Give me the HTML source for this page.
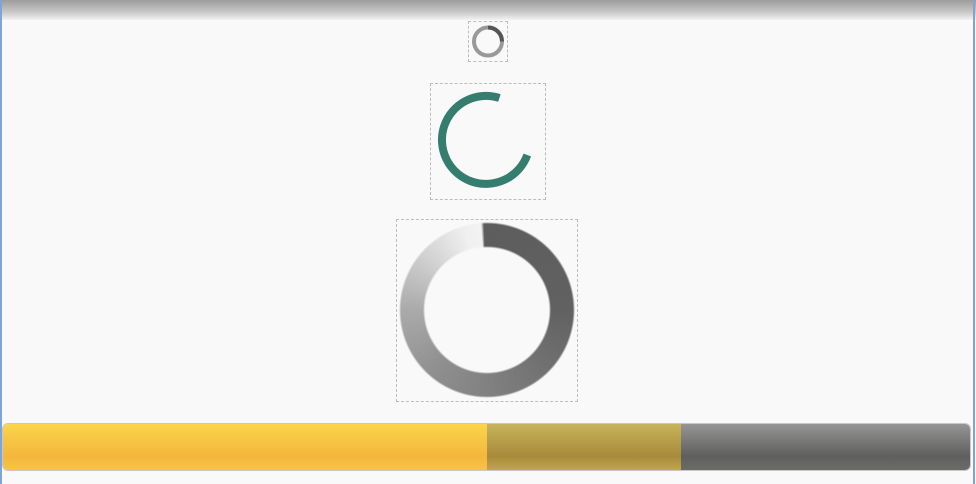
<!DOCTYPE html><html><head><style>
body{margin:0;width:976px;height:484px;background:#f9f9f9;position:relative;overflow:hidden;font-family:"Liberation Sans",sans-serif}
.top{position:absolute;left:0;top:0;width:976px;height:20px;background:linear-gradient(#9c9c9c,#c8c8c8 60%,#f2f2f2)}
.lb{position:absolute;left:0;top:0;width:2px;height:484px;background:#7ea6d4}
.rb{position:absolute;right:1px;top:0;width:2px;height:484px;background:#7ea6d4}
.box{position:absolute;border:1px dashed #bdbdbd;box-sizing:border-box}
.bar{position:absolute;left:2px;top:423px;width:969px;height:48px;border:1px solid #c8c8c8;border-radius:6px;overflow:hidden;box-sizing:border-box}
.bar div{position:absolute;top:0;height:100%}
.ring{position:absolute;left:399px;top:222px;width:176px;height:176px;border-radius:50%;
background:conic-gradient(from 0deg,#5d5d5d 0deg,#616161 90deg,#7a7a7a 160deg,#8f8f8f 220deg,#aaa 270deg,#d0d0d0 310deg,#f0f0f0 345deg,#f2f2f2 356deg,#5d5d5d 358deg);
-webkit-mask:radial-gradient(circle,transparent 62px,#000 64px,#000 86px,transparent 88px);
mask:radial-gradient(circle,transparent 62px,#000 64px,#000 86px,transparent 88px)}
</style></head><body>
<div class="top"></div><div class="lb"></div><div class="rb"></div>
<div class="box" style="left:468px;top:21px;width:40px;height:41px"></div>
<svg style="position:absolute;left:468px;top:21px" width="40" height="41"><circle cx="20" cy="20.5" r="14" fill="none" stroke="#999" stroke-width="4"/><path d="M20 6.5 A14 14 0 0 1 34 20.5" fill="none" stroke="#555" stroke-width="4"/></svg>
<div class="box" style="left:430px;top:83px;width:116px;height:117px"></div>
<svg style="position:absolute;left:430px;top:83px" width="116" height="117"><path d="M69.4 15 A44 44 0 1 0 97.3 72" fill="none" stroke="#357e6f" stroke-width="8"/></svg>
<div class="box" style="left:396px;top:219px;width:182px;height:183px"></div>
<div class="ring"></div>
<div class="bar">
<div style="left:0;width:484px;background:linear-gradient(#fad54a,#f4b73d 70%,#f6c445)"></div>
<div style="left:484px;width:194px;background:linear-gradient(#c8b35a,#a88b3b 70%,#c0a54d)"></div>
<div style="left:678px;width:300px;background:linear-gradient(#959595,#5f605d 70%,#6b6b69)"></div>
</div>
</body></html>
